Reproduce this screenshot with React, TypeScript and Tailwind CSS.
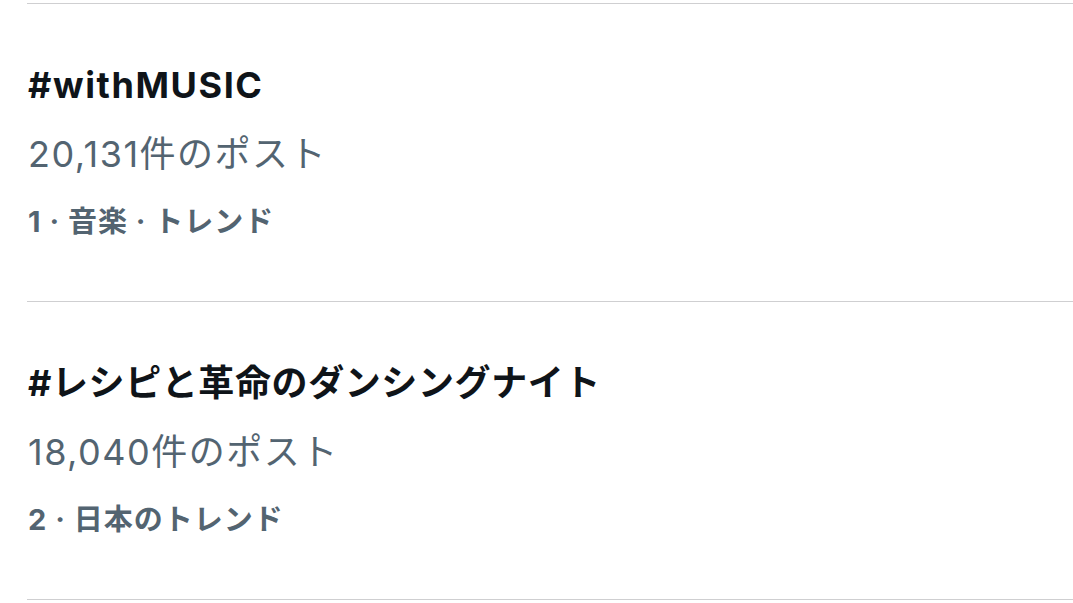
const trends = [
  { rank: 1, tag: "#withMUSIC", posts: "20,131", category: "音楽 · トレンド", tagTrack: "tracking-[1.6px]" },
  { rank: 2, tag: "#レシピと革命のダンシングナイト", posts: "18,040", category: "日本のトレンド", tagTrack: "tracking-[0.6px]" },
];

const font = "font-['Inter','Noto_Sans_CJK_JP',sans-serif]";

const App = () => {
  return (
    <div className={`w-[1073px] h-[603px] overflow-hidden bg-white pt-[3px] pl-[27px] ${font}`}>
      {trends.map((trend) => (
        <div key={trend.rank} className="border-t border-[#cfcfd1] pt-[59px] h-[298px]">
          <h2 className={`text-[36px] leading-[44px] font-bold text-[#0f1419] pl-px ${trend.tagTrack}`}>
            {trend.tag}
          </h2>
          <p className="mt-[25px] text-[36px] leading-[44px] text-[#536471] pl-px tracking-[1.5px]">
            {trend.posts}件のポスト
          </p>
          <p className="mt-[26px] text-[29px] leading-[40px] font-bold text-[#536471] pl-px whitespace-pre tracking-[1px]">
            {trend.rank} · {trend.category}
          </p>
        </div>
      ))}
      <div className="border-t border-[#cfcfd1]" />
    </div>
  );
};

export default App;
